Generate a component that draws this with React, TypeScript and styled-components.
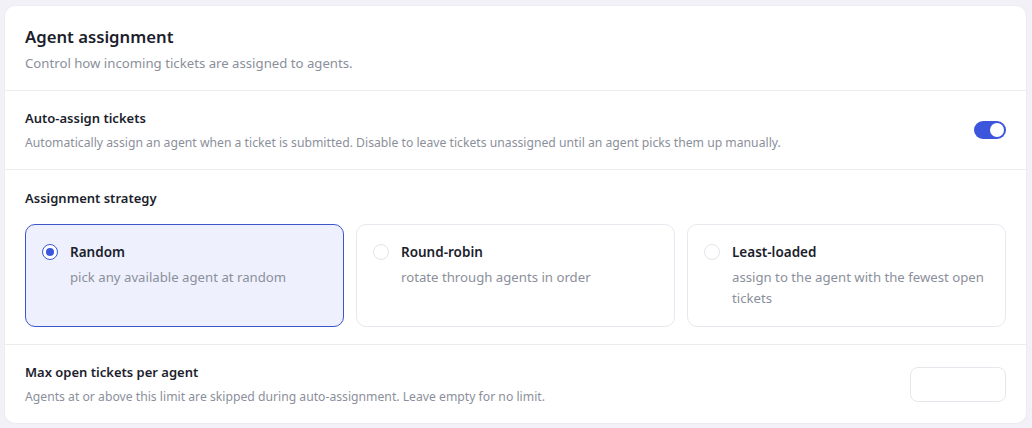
import React, { useState } from 'react';
import styled, { createGlobalStyle } from 'styled-components';

const GlobalStyle = createGlobalStyle`
  * { box-sizing: border-box; }
  html, body { margin: 0; background: #f1f1f7; }
  body {
    font-family: 'Noto Sans', 'Open Sans', sans-serif;
    color: #1b1e2c;
    -webkit-font-smoothing: antialiased;
  }
`;

const Page = styled.div`
  padding: 6px 6px 6px 5px;
`;

const Card = styled.section`
  background: #fff;
  border-radius: 10px;
  box-shadow: 0 0 0 1px #ececf2;
  overflow: hidden;
`;

const Header = styled.header`
  padding: 19px 20px 17px;
  border-bottom: 1px solid #ebecf0;
`;

const Title = styled.h2`
  margin: 0;
  font-size: 16.7px;
  line-height: 24px;
  font-weight: 600;
`;

const Subtitle = styled.p`
  margin: 4px 0 0;
  font-size: 13.2px;
  line-height: 20px;
  color: #8b8f9b;
`;

const Section = styled.div<{ $last?: boolean }>`
  padding: 17px 20px;
  border-bottom: ${({ $last }) => ($last ? 'none' : '1px solid #ebecf0')};
`;

const Row = styled(Section)`
  display: flex;
  align-items: center;
  justify-content: space-between;
  gap: 24px;
`;

const StrategySection = styled(Section)`
  padding-top: 18px;
`;

const Label = styled.div`
  font-size: 13px;
  line-height: 20px;
  font-weight: 600;
`;

const Help = styled.div`
  margin-top: 6px;
  font-size: 12.2px;
  line-height: 18px;
  color: #8b8f9b;
`;

const Toggle = styled.button<{ $on: boolean }>`
  position: relative;
  flex: none;
  width: 32px;
  height: 18px;
  padding: 0;
  border: none;
  border-radius: 9px;
  background: ${({ $on }) => ($on ? '#3b55dd' : '#d7d9e0')};
  cursor: pointer;

  &::after {
    content: '';
    position: absolute;
    top: 2px;
    left: ${({ $on }) => ($on ? '16px' : '2px')};
    width: 14px;
    height: 14px;
    border-radius: 50%;
    background: #fff;
  }
`;

const Strategies = styled.div`
  display: grid;
  grid-template-columns: repeat(3, 1fr);
  gap: 12px;
  margin-top: 16px;
`;

const Option = styled.label<{ $active: boolean }>`
  display: grid;
  grid-template-columns: 16px 1fr;
  column-gap: 12px;
  align-content: start;
  min-height: 103px;
  padding: 16px 18px 15px 16px;
  border: 1px solid ${({ $active }) => ($active ? '#3c56c9' : '#e7e8ee')};
  border-radius: 10px;
  background: ${({ $active }) => ($active ? '#eef1fd' : '#fff')};
  cursor: pointer;
`;

const Radio = styled.span<{ $checked: boolean }>`
  width: 16px;
  height: 16px;
  margin-top: 3px;
  border-radius: 50%;
  border: ${({ $checked }) => ($checked ? '1.5px solid #3b55dd' : '1px solid #e3e4ea')};
  background: #fff;
  display: grid;
  place-items: center;

  &::after {
    content: '';
    width: 8px;
    height: 8px;
    border-radius: 50%;
    background: ${({ $checked }) => ($checked ? '#3b55dd' : 'transparent')};
  }
`;

const OptionTitle = styled.div`
  font-size: 13.5px;
  line-height: 22px;
  font-weight: 600;
`;

const OptionText = styled.div`
  grid-column: 2;
  margin-top: 4px;
  font-size: 13.2px;
  line-height: 21px;
  color: #8b8f9b;
`;

const NumberInput = styled.input`
  flex: none;
  width: 96px;
  height: 35px;
  border: 1px solid #e6e7ec;
  border-radius: 8px;
  padding: 0 10px;
  font: inherit;
  font-size: 13px;
  outline: none;
`;

const strategies = [
  { id: 'random', name: 'Random', text: 'pick any available agent at random' },
  { id: 'round-robin', name: 'Round-robin', text: 'rotate through agents in order' },
  {
    id: 'least-loaded',
    name: 'Least-loaded',
    text: 'assign to the agent with the fewest open tickets',
  },
];

export default function App() {
  const [autoAssign, setAutoAssign] = useState(true);
  const [strategy, setStrategy] = useState('random');
  const [limit, setLimit] = useState('');

  return (
    <>
      <GlobalStyle />
      <Page>
        <Card>
          <Header>
            <Title>Agent assignment</Title>
            <Subtitle>Control how incoming tickets are assigned to agents.</Subtitle>
          </Header>

          <Row>
            <div>
              <Label>Auto-assign tickets</Label>
              <Help>
                Automatically assign an agent when a ticket is submitted. Disable to leave
                tickets unassigned until an agent picks them up manually.
              </Help>
            </div>
            <Toggle
              $on={autoAssign}
              aria-pressed={autoAssign}
              onClick={() => setAutoAssign((v) => !v)}
            />
          </Row>

          <StrategySection>
            <Label>Assignment strategy</Label>
            <Strategies>
              {strategies.map((s) => (
                <Option
                  key={s.id}
                  $active={strategy === s.id}
                  onClick={() => setStrategy(s.id)}
                >
                  <Radio $checked={strategy === s.id} />
                  <OptionTitle>{s.name}</OptionTitle>
                  <OptionText>{s.text}</OptionText>
                </Option>
              ))}
            </Strategies>
          </StrategySection>

          <Row $last>
            <div>
              <Label>Max open tickets per agent</Label>
              <Help>
                Agents at or above this limit are skipped during auto-assignment. Leave empty
                for no limit.
              </Help>
            </div>
            <NumberInput
              type="text"
              inputMode="numeric"
              value={limit}
              onChange={(e) => setLimit(e.target.value)}
            />
          </Row>
        </Card>
      </Page>
    </>
  );
}
